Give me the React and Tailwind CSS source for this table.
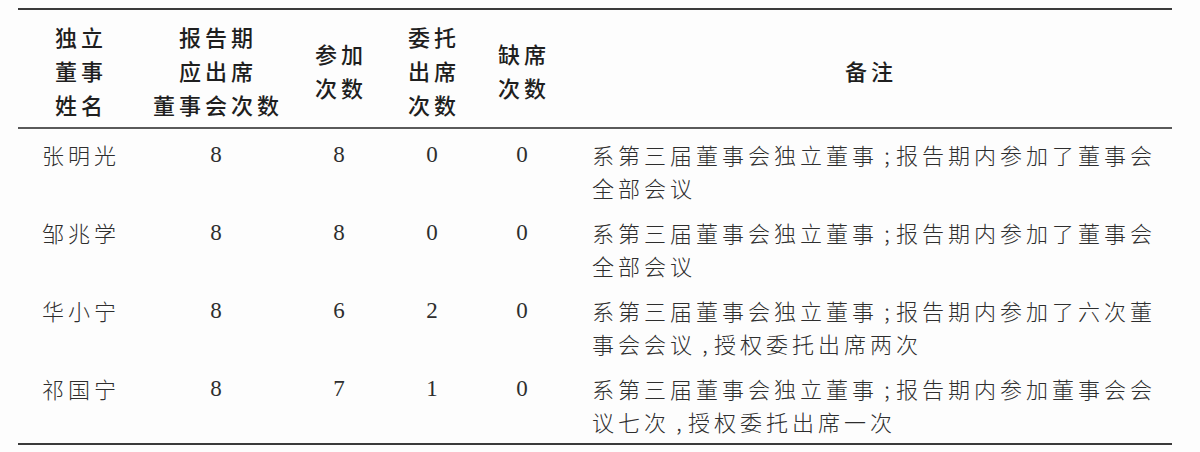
const COLS = 'grid grid-cols-[122px_152px_94px_92px_88px_1fr]';

const HEAD = [
  ['独立', '董事', '姓名'],
  ['报告期', '应出席', '董事会次数'],
  ['参加', '次数'],
  ['委托', '出席', '次数'],
  ['缺席', '次数'],
];

const ROWS = [
  {
    name: '张明光',
    nums: ['8', '8', '0', '0'],
    note: [['系第三届董事会独立董事', ';', '报告期内参加了董事会'], ['全部会议']],
  },
  {
    name: '邹兆学',
    nums: ['8', '8', '0', '0'],
    note: [['系第三届董事会独立董事', ';', '报告期内参加了董事会'], ['全部会议']],
  },
  {
    name: '华小宁',
    nums: ['8', '6', '2', '0'],
    note: [['系第三届董事会独立董事', ';', '报告期内参加了六次董'], ['事会会议', ',', '授权委托出席两次']],
  },
  {
    name: '祁国宁',
    nums: ['8', '7', '1', '0'],
    note: [['系第三届董事会独立董事', ';', '报告期内参加董事会会'], ['议七次', ',', '授权委托出席一次']],
  },
];

const cjkSans = "font-['Noto_Sans_CJK_SC',sans-serif]";

function NoteLine({ parts }) {
  return (
    <div className="whitespace-nowrap">
      {parts.map((p, i) =>
        p === ';' || p === ',' ? (
          <span key={i} className="inline-block w-[18px] text-center tracking-normal">{p}</span>
        ) : (
          <span key={i}>{p}</span>
        )
      )}
    </div>
  );
}

export default function App() {
  return (
    <div className="w-[1200px] h-[452px] bg-[#fdfdfd] pt-[8px] pl-[18px]">
      <div className="w-[1154px] border-t-2 border-b-2 border-[#3a3a3a]">
        {/* header */}
        <div className={`${COLS} h-[119px] pt-[3px] border-b-2 border-[#5a5a5a] text-[22px] leading-[34px] text-[#1f1f1f] font-medium tracking-[4px] ${cjkSans}`}>
          {HEAD.map((lines, i) => (
            <div key={i} className="flex flex-col items-center justify-center pl-[4px]">
              {lines.map((l) => (
                <div key={l}>{l}</div>
              ))}
            </div>
          ))}
          <div className="flex items-center justify-center pl-[4px]">备注</div>
        </div>

        {/* body */}
        <div className="flex flex-col gap-[12px] pt-[9px] pb-[5px] text-[#2e2e2e]">
          {ROWS.map((r) => (
            <div key={r.name} className={`${COLS} leading-[33px]`}>
              <div className={`text-center text-[22px] font-light tracking-[4px] pl-[4px] ${cjkSans}`}>{r.name}</div>
              {r.nums.map((n, i) => (
                <div key={i} className="text-center text-[23px] font-['Liberation_Serif',serif]">{n}</div>
              ))}
              <div className={`pl-[26px] text-[22px] font-light tracking-[4px] ${cjkSans}`}>
                {r.note.map((parts, i) => (
                  <NoteLine key={i} parts={parts} />
                ))}
              </div>
            </div>
          ))}
        </div>
      </div>
    </div>
  );
}
